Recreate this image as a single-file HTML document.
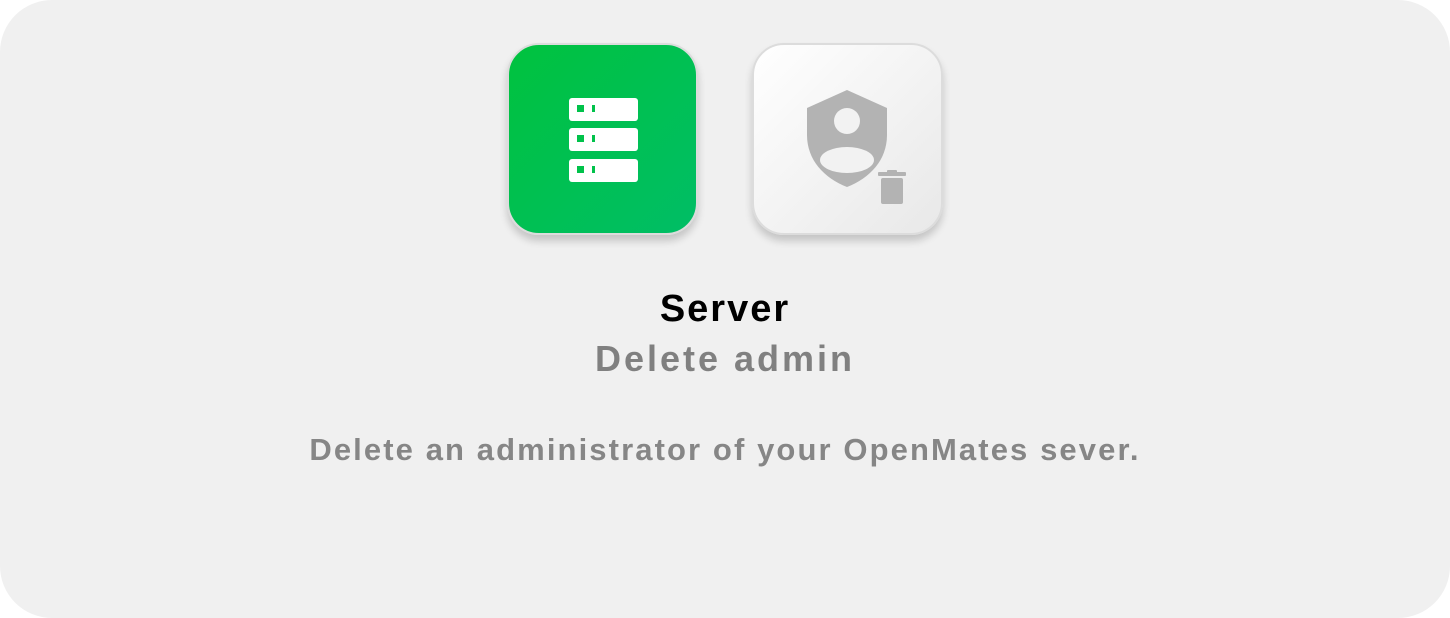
<!DOCTYPE html>
<html><head><style>
html,body{margin:0;padding:0;background:#fff;}
.card{position:absolute;left:0;top:0;width:1450px;height:618px;background:#f0f0f0;border-radius:52px;font-family:"Liberation Sans",sans-serif;}
.tile{position:absolute;top:43px;width:191px;height:192px;border-radius:32px;box-sizing:border-box;border:2px solid #dcdcdc;box-shadow:0 6px 8px rgba(0,0,0,.18);}
.g{left:507px;background:linear-gradient(135deg,#00c23e,#00be66);}
.w{left:752px;background:linear-gradient(135deg,#ffffff,#e8e8e8);}
.t{position:absolute;left:0;width:1450px;text-align:center;}
</style></head><body>
<div class="card">
<div class="tile g"></div>
<div class="tile w"></div>
<svg style="position:absolute;left:0;top:0" width="1450" height="618">
<g fill="#fff">
<rect x="569" y="98" width="69" height="23" rx="3"/>
<rect x="569" y="128" width="69" height="23" rx="3"/>
<rect x="569" y="159" width="69" height="23" rx="3"/>
</g>
<g fill="#00c24a">
<rect x="577" y="105" width="7" height="7"/><rect x="592" y="105" width="3" height="7"/>
<rect x="577" y="135" width="7" height="7"/><rect x="592" y="135" width="3" height="7"/>
<rect x="577" y="166" width="7" height="7"/><rect x="592" y="166" width="3" height="7"/>
</g>
<defs><clipPath id="sh"><path d="M847 90 L887 108 V135 C887 160 870 178 847 187 C824 178 807 160 807 135 V108 Z"/></clipPath></defs>
<path d="M847 90 L887 108 V135 C887 160 870 178 847 187 C824 178 807 160 807 135 V108 Z" fill="#b3b3b3"/>
<g clip-path="url(#sh)" fill="#f2f2f2">
<circle cx="847" cy="121" r="13"/>
<ellipse cx="847" cy="160" rx="27" ry="13"/>
</g>
<g fill="#b3b3b3">
<rect x="878" y="172" width="28" height="4" rx="1"/>
<rect x="887" y="170" width="10" height="3" rx="1"/>
<rect x="881" y="178" width="22" height="26" rx="2"/>
</g>
</svg>
<div class="t" style="top:288px;font-size:38px;font-weight:bold;color:#000;letter-spacing:2px;">Server</div>
<div class="t" style="top:338px;font-size:36px;font-weight:bold;color:#808080;letter-spacing:3px;">Delete admin</div>
<div class="t" style="top:432px;font-size:31px;font-weight:bold;color:#868686;letter-spacing:2.1px;">Delete an administrator of your OpenMates sever.</div>
</div>
</body></html>
